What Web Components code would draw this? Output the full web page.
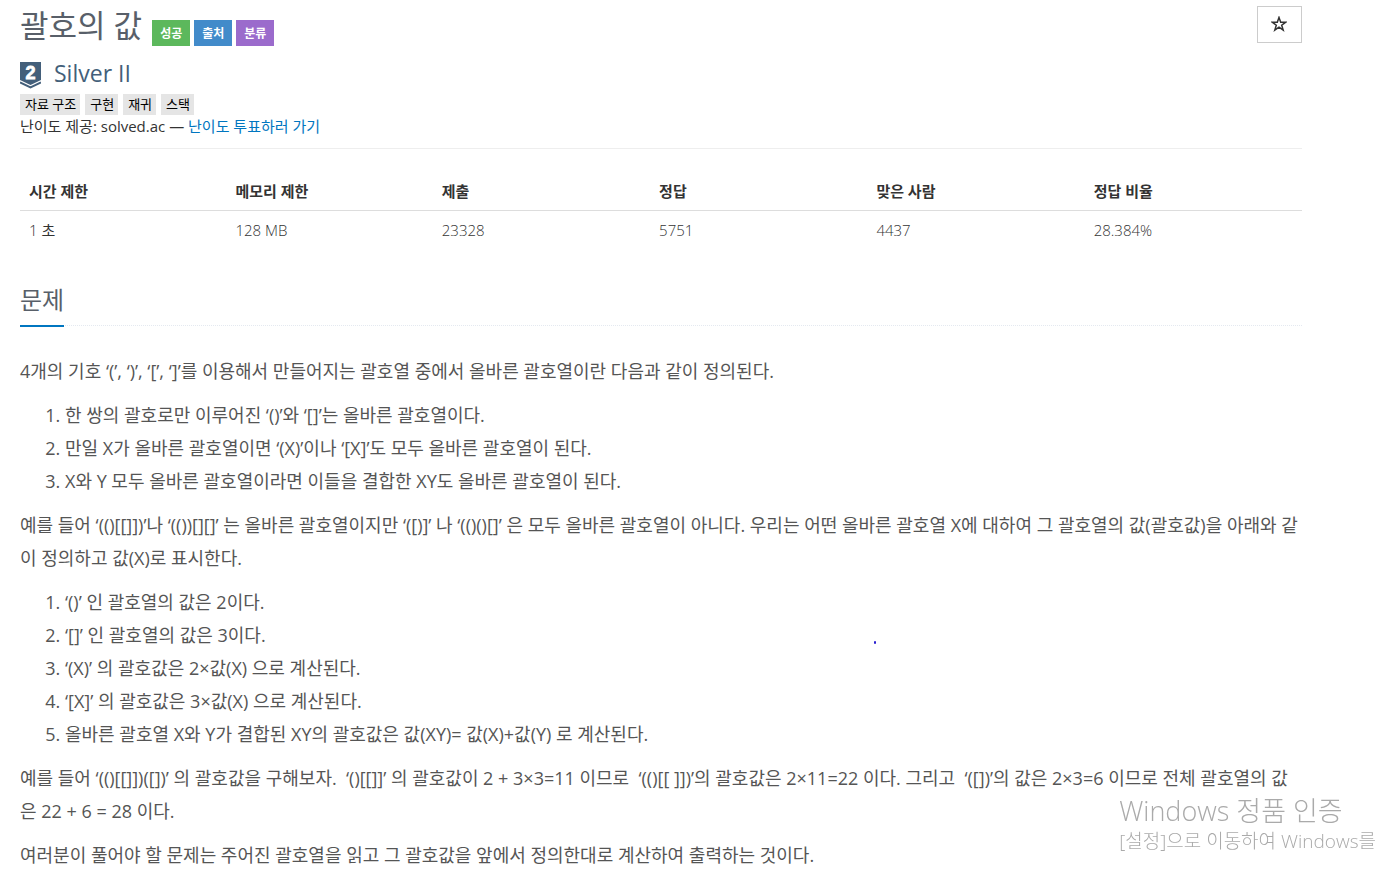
<!DOCTYPE html>
<html lang="ko">
<head>
<meta charset="utf-8">
<meta name="viewport" content="width=device-width, initial-scale=1">
<title>괄호의 값</title>
<style>
  html { overflow: hidden; }
  body { margin: 0; background: #fff; color: #333; font: 400 15px/20px "Open Sans", "Noto Sans CJK KR", sans-serif; }
</style>
</head>
<body>
<problem-page>
  <problem-header heading="괄호의 값">
    <status-label kind="success">성공</status-label>
    <status-label kind="source">출처</status-label>
    <status-label kind="category">분류</status-label>
  </problem-header>
  <problem-tier level="2" name="Silver II">
    <tag-chip>자료 구조</tag-chip>
    <tag-chip>구현</tag-chip>
    <tag-chip>재귀</tag-chip>
    <tag-chip>스택</tag-chip>
  </problem-tier>
  <problem-stats></problem-stats>
  <problem-section heading="문제">
    <p>4개의 기호 ‘(’, ‘)’, ‘[’, ‘]’를 이용해서 만들어지는 괄호열 중에서 올바른 괄호열이란 다음과 같이 정의된다.</p>
    <ol>
      <li>한 쌍의 괄호로만 이루어진 ‘()’와 ‘[]’는 올바른 괄호열이다.</li>
      <li>만일 X가 올바른 괄호열이면 ‘(X)’이나 ‘[X]’도 모두 올바른 괄호열이 된다.</li>
      <li>X와 Y 모두 올바른 괄호열이라면 이들을 결합한 XY도 올바른 괄호열이 된다.</li>
    </ol>
    <p>예를 들어 ‘(()[[]])’나 ‘(())[][]’ 는 올바른 괄호열이지만 ‘([)]’ 나 ‘(()()[]’ 은 모두 올바른 괄호열이 아니다. 우리는 어떤 올바른 괄호열 X에 대하여 그 괄호열의 값(괄호값)을 아래와 같이 정의하고 값(X)로 표시한다.</p>
    <ol>
      <li>‘()’ 인 괄호열의 값은 2이다.</li>
      <li>‘[]’ 인 괄호열의 값은 3이다.</li>
      <li>‘(X)’ 의 괄호값은 2×값(X) 으로 계산된다.</li>
      <li>‘[X]’ 의 괄호값은 3×값(X) 으로 계산된다.</li>
      <li>올바른 괄호열 X와 Y가 결합된 XY의 괄호값은 값(XY)= 값(X)+값(Y) 로 계산된다.</li>
    </ol>
    <p>예를 들어 ‘(()[[]])([])’ 의 괄호값을 구해보자.&nbsp; ‘()[[]]’ 의 괄호값이 2 + 3×3=11 이므로&nbsp; ‘(()[[ ]])’의 괄호값은 2×11=22 이다. 그리고&nbsp; ‘([])’의 값은 2×3=6 이므로 전체 괄호열의 값은 22 + 6 = 28 이다.</p>
    <p>여러분이 풀어야 할 문제는 주어진 괄호열을 읽고 그 괄호값을 앞에서 정의한대로 계산하여 출력하는 것이다.</p>
  </problem-section>
</problem-page>
<pen-dot></pen-dot>
<activation-notice></activation-notice>

<script>
function define(name, render) {
  customElements.define(name, class extends HTMLElement {
    constructor() {
      super();
      this.attachShadow({ mode: "open" });
    }
    connectedCallback() {
      this.shadowRoot.innerHTML = render(this);
    }
  });
}

define("problem-page", () => `
  <style>
    :host { display: block; padding: 6px 74px 0 20px; }
  </style>
  <main><slot></slot></main>`);

define("problem-header", el => `
  <style>
    :host { display: flex; justify-content: space-between; align-items: flex-start; height: 53px; }
    .title { display: flex; align-items: flex-end; gap: 10px; height: 40px; }
    h1 { margin: 0; font-size: 31px; line-height: 42px; font-weight: 400; color: #585f69; }
    .labels { display: flex; gap: 4px; }
    button { width: 45px; height: 37px; padding: 0 1px 1px 0; border: 1px solid #ccc; background: #fff; cursor: pointer; }
    svg { display: block; margin: auto; }
  </style>
  <div class="title">
    <h1>${el.getAttribute("heading")}</h1>
    <div class="labels"><slot></slot></div>
  </div>
  <button type="button" aria-label="즐겨찾기">
    <svg width="16" height="16" viewBox="0 0 16 16"><path d="M8 1.400 9.700 6.200h5l-4 3 1.500 4.900L8 11.200l-4.200 2.900 1.500-4.900-4-3h5z" fill="none" stroke="#333" stroke-width="1.500"/></svg>
  </button>`);

define("status-label", () => `
  <style>
    :host { display: block; padding: 4px 8px 2px; font-size: 12px; line-height: 20px; font-weight: 700; color: #fff; background: #5cb85c; }
    :host([kind="source"]) { background: #428bca; }
    :host([kind="category"]) { background: #9b6bcc; }
  </style>
  <slot></slot>`);

define("problem-tier", el => `
  <style>
    :host { display: block; padding-bottom: 12px; border-bottom: 1px solid #eee; }
    .tier { display: flex; align-items: center; gap: 13px; height: 35px; color: #435f7a; font-size: 23px; line-height: 28px; }
    .tier svg { margin-bottom: 2px; }
    .tier span { padding-bottom: 8px; }
    .tags { display: flex; gap: 5px; }
    p { margin: 1px 0 0; }
    a { color: #0076c0; text-decoration: none; }
  </style>
  <div class="tier">
    <svg width="21" height="27" viewBox="0 0 21 27" role="img" aria-label="tier">
      <path d="M0 0h21v18l-10.500 5L0 18z" fill="#435f7a"/>
      <path d="M0 20.500l10.500 5 10.500-5" fill="none" stroke="#435f7a" stroke-width="2"/>
      <text x="10.500" y="17" text-anchor="middle" font-family="Liberation Sans" font-weight="700" font-size="18" fill="#fff" stroke="#fff" stroke-width=".8">${el.getAttribute("level")}</text>
    </svg>
    <span>${el.getAttribute("name")}</span>
  </div>
  <div class="tags"><slot></slot></div>
  <p>난이도 제공: solved.ac — <a href="#vote">난이도 투표하러 가기</a></p>`);

define("tag-chip", () => `
  <style>
    :host { display: block; padding: 0 4px 0 5px; font-size: 13px; line-height: 21px; color: #000; background: #e5e5e5; }
  </style>
  <slot></slot>`);

define("problem-stats", () => {
  const columns = [["시간 제한", "<span>1</span> 초"], ["메모리 제한", "<span>128 MB</span>"], ["제출", "<span>23328</span>"],
                   ["정답", "<span>5751</span>"], ["맞은 사람", "<span>4437</span>"], ["정답 비율", "<span>28.384%</span>"]];
  return `
  <style>
    :host { display: block; margin: 24px 0 33px; }
    table { width: 100%; border-collapse: collapse; table-layout: fixed; }
    .limit { width: 16.1%; }
    th, td { padding: 8px 9px; text-align: left; line-height: 21px; }
    th { font-weight: 700; border-bottom: 1px solid #ddd; }
    td { padding-top: 9px; }
    span { font-weight: 300; }
  </style>
  <table>
    <colgroup><col class="limit"><col class="limit"><col span="4"></colgroup>
    <thead><tr>${columns.map(c => `<th scope="col">${c[0]}</th>`).join("")}</tr></thead>
    <tbody><tr>${columns.map(c => `<td>${c[1]}</td>`).join("")}</tr></tbody>
  </table>`;
});

define("problem-section", el => `
  <style>
    :host { display: block; }
    header { display: flex; border-bottom: 1px dotted #e4e9f0; margin-bottom: 29px; }
    h2 { margin: 0 0 -2px; padding-bottom: 7px; border-bottom: 2px solid #0076c0; color: #585f69; font-size: 24px; line-height: 36px; font-weight: 400; }
    .body { color: #555; font-size: 18px; line-height: 33px; }
    ::slotted(p) { margin: 0 0 11px; }
    ::slotted(ol) { margin: 0 0 11px; padding: 0 0 0 45px; }
  </style>
  <section>
    <header><h2>${el.getAttribute("heading")}</h2></header>
    <div class="body"><slot></slot></div>
  </section>`);

define("pen-dot", () => `
  <style>
    :host { position: absolute; left: 874px; top: 641px; width: 2px; height: 3px; border-radius: 1px; background: #2a1fd0; }
  </style>`);

define("activation-notice", () => `
  <style>
    :host { position: fixed; right: 0; bottom: 23px; color: #aaa; font-weight: 300; white-space: nowrap; pointer-events: none; }
    p { margin: 0; }
    .head { font-size: 27px; line-height: 34px; }
    .text { font-size: 19px; line-height: 26px; }
  </style>
  <p class="head">Windows 정품 인증</p>
  <p class="text">[설정]으로 이동하여 Windows를</p>`);
</script>
</body>
</html>
